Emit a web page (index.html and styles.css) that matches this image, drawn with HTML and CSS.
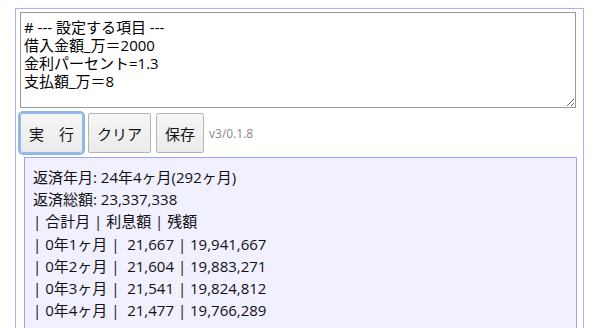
FILE: index.html
```html
<!DOCTYPE html>
<html lang="ja">
<head>
<meta charset="utf-8">
<title>返済計算</title>
<link rel="stylesheet" href="styles.css">
</head>
<body>
<div class="wrap">
<textarea class="input"># --- 設定する項目 ---
借入金額_万＝2000
金利パーセント=1.3
支払額_万＝8</textarea>
<div class="toolbar">
<button class="btn btn-focus">実　行</button>
<button class="btn">クリア</button>
<button class="btn">保存</button>
<span class="ver">v3/0.1.8</span>
</div>
<div class="result">
<div>返済年月: 24年4ヶ月(292ヶ月)</div>
<div>返済総額: 23,337,338</div>
<div>| 合計月 | 利息額 | 残額</div>
<div>| 0年1ヶ月 |&nbsp; 21,667 | 19,941,667</div>
<div>| 0年2ヶ月 |&nbsp; 21,604 | 19,883,271</div>
<div>| 0年3ヶ月 |&nbsp; 21,541 | 19,824,812</div>
<div>| 0年4ヶ月 |&nbsp; 21,477 | 19,766,289</div>
</div>
</div>
</body>
</html>
```
FILE: styles.css
```css
body {
  margin: 8px;
  background: #fff;
  font-family: "Open Sans", "Noto Sans CJK JP", sans-serif;
  color: #111;
}
.wrap {
  margin: 0 8px 0 7px;
  border: 1px solid #aab0ff;
  padding: 3px 7px 10px 4px;
}
.input {
  display: block;
  box-sizing: border-box;
  width: 556px;
  height: 96px;
  margin: 0;
  padding: 5px 3px 4px;
  border: 1px solid #999;
  font-family: "Open Sans", "Noto Sans CJK JP", sans-serif;
  font-size: 15px;
  line-height: 18px;
  color: #000;
  resize: vertical;
}
.toolbar {
  display: flex;
  align-items: center;
  gap: 5px;
  margin-top: 5px;
}
.btn {
  height: 40px;
  padding: 0 8px;
  margin: 0;
  border: 1px solid #b4b4b4;
  border-radius: 2px;
  background: linear-gradient(#f6f6f6, #ebebeb);
  font-family: "Open Sans", "Noto Sans CJK JP", sans-serif;
  font-size: 15px;
  color: #111;
}
.btn-focus {
  border-color: #9cb8dd;
  box-shadow: 0 0 0 2px #8db7f0;
  border-radius: 3px;
}
.ver {
  font-size: 12px;
  color: #888;
}
.result {
  margin: 4px 0 0 4px;
  width: 553px;
  box-sizing: border-box;
  border: 1px solid #a0a0ff;
  background: #f0f0ff;
  padding: 8px 8px 30px;
  font-size: 15px;
  line-height: 22.2px;
  color: #111;
}
```
